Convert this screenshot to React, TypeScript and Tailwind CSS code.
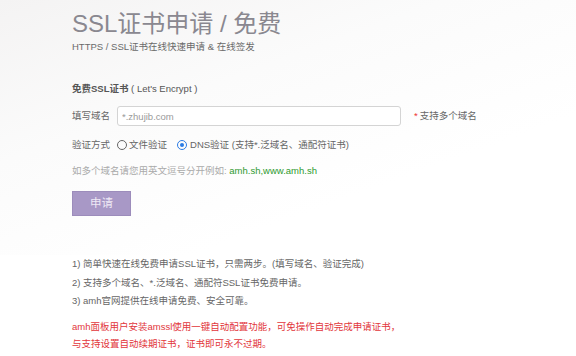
import { useState } from 'react';

export default function App() {
    const [domain, setDomain] = useState('');
    const [method, setMethod] = useState<'file' | 'dns'>('dns');

    return (
        <div
            className="min-h-[356px] w-full bg-white text-[9.5px] text-[#666]"
            style={{ fontFamily: '"Liberation Sans", Arial, "Noto Sans CJK SC", sans-serif' }}
        >
            {/* top area with faint grey shading */}
            <div className="bg-[linear-gradient(160deg,#f4f3f3_0%,#fbfbfb_35%,#ffffff_70%)] pb-[1px] pl-[72px] pt-[10px]">
                <h1 className="h-[28px] text-[24px] leading-[28px] font-normal text-[#8a8890]">SSL证书申请 / 免费</h1>
                <p className="mt-[3px] h-[12px] leading-[12px] text-[#6a6a6a]">HTTPS / SSL证书在线快速申请 &amp; 在线签发</p>

                <div className="mt-[30px] h-[12px] leading-[12px] text-[#555]">
                    <span className="font-bold">免费SSL证书</span> ( Let's Encrypt )
                </div>

                <div className="mt-[11px] flex h-[20px] items-center">
                    <label className="w-[45px] shrink-0">填写域名</label>
                    <input
                        value={domain}
                        onChange={(e) => setDomain(e.target.value)}
                        placeholder="*.zhujib.com"
                        className="h-[20px] w-[284px] rounded-[3px] border border-[#d4d4d4] bg-white px-[4px] text-[9.5px] text-[#555] outline-none placeholder:text-[#9a9a9a]"
                    />
                    <span className="ml-[13px] text-[#e33]">*</span>
                    <span className="ml-[2px]">支持多个域名</span>
                </div>

                <div className="mt-[12px] flex h-[14px] items-center">
                    <span className="w-[45px] shrink-0">验证方式</span>
                    <button type="button" onClick={() => setMethod('file')} className="flex items-center">
                        <span
                            className={
                                method === 'file'
                                    ? 'flex h-[10px] w-[10px] items-center justify-center rounded-full border-[1.5px] border-[#2b7be4]'
                                    : 'flex h-[10px] w-[10px] items-center justify-center rounded-full border border-[#666]'
                            }
                        >
                            {method === 'file' && <span className="h-[4px] w-[4px] rounded-full bg-[#2b7be4]" />}
                        </span>
                        <span className="ml-[2px]">文件验证</span>
                    </button>
                    <button type="button" onClick={() => setMethod('dns')} className="ml-[10px] flex items-center">
                        <span
                            className={
                                method === 'dns'
                                    ? 'flex h-[10px] w-[10px] items-center justify-center rounded-full border-[1.5px] border-[#2b7be4]'
                                    : 'flex h-[10px] w-[10px] items-center justify-center rounded-full border border-[#666]'
                            }
                        >
                            {method === 'dns' && <span className="h-[4px] w-[4px] rounded-full bg-[#2b7be4]" />}
                        </span>
                        <span className="ml-[3px]">DNS验证 (支持*.泛域名、通配符证书)</span>
                    </button>
                </div>

                <div className="mt-[13px] h-[12px] leading-[12px] text-[#aaa]">
                    如多个域名请您用英文逗号分开例如: <span className="text-[#2f9a2f]">amh.sh,www.amh.sh</span>
                </div>

                <button
                    type="button"
                    className="mt-[14px] h-[25px] w-[59px] border border-[#9c8cbb] bg-[#a898c6] text-[11.5px] text-[#efe9f5]"
                >
                    申请
                </button>
                <div className="h-[38px]" />
            </div>

            <div className="pl-[72px]">
                <div className="leading-[18.5px] text-[#666]">
                    <p>1) 简单快速在线免费申请SSL证书，只需两步。(填写域名、验证完成)</p>
                    <p>2) 支持多个域名、*.泛域名、通配符SSL证书免费申请。</p>
                    <p>3) amh官网提供在线申请免费、安全可靠。</p>
                </div>
                <div className="mt-[7px] leading-[17px] text-[#e2363b]">
                    <p>amh面板用户安装amssl使用一键自动配置功能，可免操作自动完成申请证书，</p>
                    <p>与支持设置自动续期证书，证书即可永不过期。</p>
                </div>
            </div>
        </div>
    );
}
